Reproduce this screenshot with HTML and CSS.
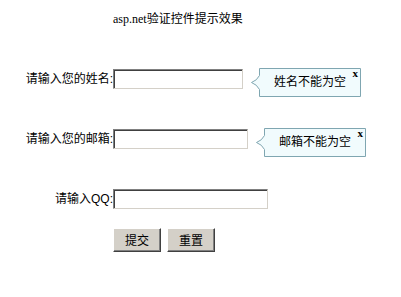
FILE: index.html
```html
<!DOCTYPE html>
<html>
<head>
<meta charset="utf-8">
<link rel="stylesheet" href="styles.css">
</head>
<body>
<div class="page">
  <div class="title">asp.net验证控件提示效果</div>
  <div class="rows">
    <div class="row">
      <label class="label">请输入您的姓名:</label>
      <input class="field w-name" type="text">
      <div class="tip">
        <svg class="tip-shape" width="110" height="29" viewBox="0 0 110 29"><path d="M8.5,0.5 H109.5 V28.5 H8.5 V21.5 Q6,16.5 0.5,14.5 Q6,12.5 8.5,7.5 Z" fill="#f1fbfd" stroke="#7fa6b1"/></svg>
        <span class="tip-text">姓名不能为空</span>
        <span class="tip-close">x</span>
      </div>
    </div>
    <div class="row">
      <label class="label">请输入您的邮箱:</label>
      <input class="field w-mail" type="text">
      <div class="tip">
        <svg class="tip-shape" width="110" height="29" viewBox="0 0 110 29"><path d="M8.5,0.5 H109.5 V28.5 H8.5 V21.5 Q6,16.5 0.5,14.5 Q6,12.5 8.5,7.5 Z" fill="#f1fbfd" stroke="#7fa6b1"/></svg>
        <span class="tip-text">邮箱不能为空</span>
        <span class="tip-close">x</span>
      </div>
    </div>
    <div class="row">
      <label class="label">请输入QQ:</label>
      <input class="field w-qq" type="text">
    </div>
  </div>
  <div class="buttons">
    <button class="btn" type="button">提交</button>
    <button class="btn" type="button">重置</button>
  </div>
</div>
</body>
</html>
```
FILE: styles.css
```css
html, body {
  margin: 0;
  padding: 0;
  background: #ffffff;
}
.page {
  padding-top: 12px;
  font-family: "Liberation Sans", "Noto Sans CJK SC", sans-serif;
  font-size: 12px;
  color: #000;
}
.title {
  padding-left: 113px;
  font-family: "Liberation Serif", "Noto Sans CJK SC", serif;
  font-size: 12px;
  line-height: 14px;
  height: 14px;
  margin-bottom: 42px;
}
.rows {
  display: flex;
  flex-direction: column;
  gap: 31px;
}
.row {
  display: flex;
  align-items: flex-start;
  height: 29px;
}
.label {
  width: 113px;
  text-align: right;
  line-height: 20px;
  margin-top: 1px;
  white-space: nowrap;
}
.field {
  box-sizing: border-box;
  height: 20px;
  margin: 1px 0 0 0;
  padding: 0 2px;
  border: 1px solid;
  border-color: #808080 #d4d0c8 #d4d0c8 #808080;
  box-shadow: inset 1px 1px 0 #404040;
  background: #fff;
  font-size: 12px;
  outline: none;
}
.w-name { width: 130px; }
.w-mail { width: 135px; }
.w-qq { width: 155px; }
.tip {
  position: relative;
  width: 110px;
  height: 29px;
  margin-left: 8px;
}
.tip-shape {
  position: absolute;
  left: 0;
  top: 0;
}
.tip-text {
  position: relative;
  display: block;
  margin-left: 8px;
  width: 102px;
  text-align: center;
  line-height: 29px;
  font-size: 12px;
}
.tip-close {
  position: absolute;
  right: 3px;
  top: 0;
  font-family: "Liberation Serif", serif;
  font-weight: bold;
  font-size: 11px;
  line-height: 10px;
}
.buttons {
  display: flex;
  gap: 6px;
  margin-top: 11px;
  padding-left: 113px;
}
.btn {
  box-sizing: border-box;
  width: 48px;
  height: 24px;
  padding: 0;
  margin: 0;
  background: #d4d0c8;
  border: 1px solid;
  border-color: #ffffff #404040 #404040 #ffffff;
  box-shadow: inset -1px -1px 0 #808080;
  font-family: "Noto Sans CJK SC", sans-serif;
  font-size: 12px;
  line-height: 20px;
  color: #000;
}
```
